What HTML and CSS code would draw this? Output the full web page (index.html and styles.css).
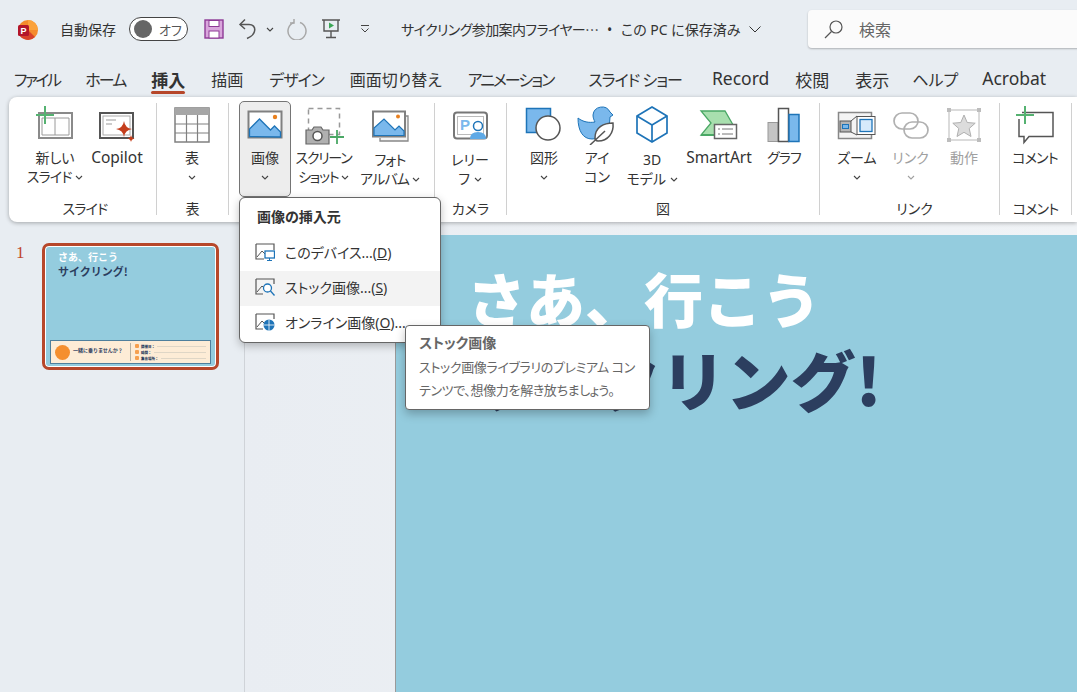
FILE: index.html
```html
<!DOCTYPE html>
<html lang="ja">
<head>
    <meta charset="UTF-8">
    <title>PowerPoint</title>
    <link rel="stylesheet" href="styles.css">
</head>
<body>
<div class="app">
    <!-- title bar -->
    <div class="titlebar">
        <svg class="logo" width="20" height="20" viewBox="0 0 20 20">
            <circle cx="10" cy="10" r="10" fill="#f58a2c"/>
            <path d="M10 0a10 10 0 0 1 10 10H10z" fill="#fba23b"/>
            <path d="M0 10a10 10 0 0 0 17 7l-7-7z" fill="#d8402a"/>
            <rect x="0" y="5" width="11" height="11" rx="1.5" fill="#b3152a"/>
            <text x="5.500" y="13.500" class="logo-p">P</text>
        </svg>
        <span class="autosave">自動保存</span>
        <div class="toggle"><span class="knob"></span><span class="toggle-text">オフ</span></div>
        <svg class="qat-save" width="20" height="20" viewBox="0 0 20 20">
            <rect x="1" y="1" width="18" height="18" fill="#d9a6dc" stroke="#8e3a96" stroke-width="1.4"/>
            <rect x="5" y="1.5" width="10" height="6" fill="#fff" stroke="#8e3a96"/>
            <rect x="5" y="12" width="10" height="7" fill="#fff" stroke="#8e3a96"/>
        </svg>
        <svg class="qat-undo" width="20" height="22" viewBox="0 0 20 22" fill="none" stroke="#555" stroke-width="1.500">
            <path d="M7 1.500 2 6.500l5 4.500"/><path d="M2.500 6.500H11c8 0 8 10-2 14"/>
        </svg>
        <svg class="chev qat-chev" width="8" height="5" viewBox="0 0 8 5"><path d="M1 1l3 3 3-3"/></svg>
        <svg class="qat-redo" width="22" height="22" viewBox="0 0 22 22" fill="none" stroke="#a8a8a8" stroke-width="1.500">
            <path d="M14 4.500a9 9 0 1 1-6 0"/><path d="M8 1v4H4"/>
        </svg>
        <svg class="qat-show" width="20" height="20" viewBox="0 0 20 20" fill="none" stroke="#555" stroke-width="1.400">
            <path d="M1 1h18M3 1v11h14V1M10 12v6M5 18.500h10"/>
            <path d="M8 3.500l5 3-5 3z" fill="#3aa655" stroke="none"/>
        </svg>
        <svg class="qat-more" width="10" height="8" viewBox="0 0 10 8" fill="none" stroke="#444"><path d="M1 .5h8M1.500 3.500 5 7l3.500-3.500"/></svg>
        <span class="docname">サイクリング参加案内フライヤー…</span>
        <span class="dot">•</span>
        <span class="saved">この PC に保存済み</span>
        <svg class="saved-chev" width="12" height="7" viewBox="0 0 12 7" fill="none" stroke="#333"><path d="M.5.5 6 6l5.500-5.500"/></svg>
        <div class="search">
            <svg width="20" height="20" viewBox="0 0 20 20" fill="none" stroke="#555" stroke-width="1.200"><circle cx="12" cy="8" r="6"/><path d="M7.500 12.500 1 19"/></svg>
            <span>検索</span>
        </div>
    </div>

    <!-- tabs -->
    <div class="tabs">
        <div class="tab k2 file">ファイル</div>
        <div class="tab k2">ホーム</div>
        <div class="tab big active">挿入</div>
        <div class="tab">描画</div>
        <div class="tab k1">デザイン</div>
        <div class="tab">画面切り替え</div>
        <div class="tab k2 wide-r">アニメーション</div>
        <div class="tab k1 wide">スライド ショー</div>
        <div class="tab lat wide-l">Record</div>
        <div class="tab big">校閲</div>
        <div class="tab big">表示</div>
        <div class="tab help">ヘルプ</div>
        <div class="tab lat">Acrobat</div>
    </div>

    <!-- ribbon -->
    <div class="ribbon">
        <div class="group g-slide">
            <div class="btns">
                <div class="btn w62">
                    <svg class="ico" viewBox="0 0 40 40" fill="none">
                        <rect x="4" y="8" width="33" height="25" fill="#fff" stroke="#8a8a8a" stroke-width="2"/>
                        <path d="M7 13h27v17H7zM20 13v17" stroke="#9a9a9a"/>
                        <path d="M10 1v18M1 10h18" stroke="#55b271" stroke-width="2"/>
                    </svg>
                    <div class="lbl">新しい<br><span class="tight">スライド</span> <svg class="chev" width="8" height="5" viewBox="0 0 8 5"><path d="M1 1l3 3 3-3"/></svg></div>
                </div>
                <div class="btn w62">
                    <svg class="ico" viewBox="0 0 40 40" fill="none">
                        <rect x="3" y="8" width="33" height="25" fill="#fff" stroke="#555" stroke-width="2"/>
                        <rect x="6" y="11" width="27" height="19" stroke="#aaa"/>
                        <path d="M9 15h10M9 19h6" stroke="#999"/>
                        <path d="M27 16q1 7 8 8-7 1-8 8-1-7-8-8 7-1 8-8z" fill="#c43e1c"/>
                        <path d="M34 30q.5 3 3.500 3.500-3 .5-3.500 3.500-.5-3-3.500-3.500 3-.5 3.500-3.500z" fill="#c43e1c"/>
                    </svg>
                    <div class="lbl lat">Copilot</div>
                </div>
            </div>
            <div class="grp-label tight">スライド</div>
        </div>

        <div class="group g-table">
            <div class="btns">
                <div class="btn w70">
                    <svg class="ico" viewBox="0 0 40 40" fill="none">
                        <rect x="3" y="3" width="34" height="34" fill="#fff" stroke="#808080" stroke-width="1.500"/>
                        <rect x="3" y="3" width="34" height="7" fill="#a6a6a6"/>
                        <path d="M14.500 10v27M25.500 10v27M3 19h34M3 28h34" stroke="#808080" stroke-width="1.200"/>
                    </svg>
                    <div class="lbl">表<br><svg class="chev" width="8" height="5" viewBox="0 0 8 5"><path d="M1 1l3 3 3-3"/></svg></div>
                </div>
            </div>
            <div class="grp-label">表</div>
        </div>

        <div class="group g-image">
            <div class="btns">
                <div class="btn w52 pressed">
                    <svg class="ico" viewBox="0 0 40 40" fill="none">
                        <rect x="3.500" y="6.500" width="33" height="26" fill="#fff" stroke="#808080" stroke-width="2"/>
                        <path d="M4.500 31.500V24l10-10 11 11 4-4 6 6v5z" fill="#7ab8ec" stroke="#1e74b8" stroke-width="1.300"/>
                        <circle cx="30" cy="12" r="2.200" fill="#e8801f"/>
                    </svg>
                    <div class="lbl">画像<br><svg class="chev" width="8" height="5" viewBox="0 0 8 5"><path d="M1 1l3 3 3-3"/></svg></div>
                </div>
                <div class="btn w65">
                    <svg class="ico" viewBox="0 0 40 40" fill="none">
                        <rect x="4.500" y="3.500" width="31" height="26" stroke="#999" stroke-width="1.500" stroke-dasharray="5 4"/>
                        <path d="M2 26h6l2-3h7l2 3h6v14H2z" transform="translate(0 -1)" fill="#b0b0b0" stroke="#666" stroke-width="1.200"/>
                        <circle cx="13.500" cy="31" r="4.500" fill="#fff" stroke="#555" stroke-width="1.500"/>
                        <path d="M33 25v14M26 32h14" stroke="#4aa865" stroke-width="1.800"/>
                    </svg>
                    <div class="lbl tighter">スクリーン<br>ショット <svg class="chev" width="8" height="5" viewBox="0 0 8 5"><path d="M1 1l3 3 3-3"/></svg></div>
                </div>
                <div class="btn w68">
                    <svg class="ico" viewBox="0 0 40 40" fill="none">
                        <path d="M35 11h3v25H10v-3" fill="#f3f3f3" stroke="#888" stroke-width="1.300"/>
                        <rect x="3" y="6.500" width="32" height="25" fill="#fff" stroke="#808080" stroke-width="2"/>
                        <path d="M4 30.500V23l10-9 11 11 4-4 5 5v4.500z" fill="#7ab8ec" stroke="#1e74b8" stroke-width="1.200"/>
                        <circle cx="28" cy="11.500" r="2" fill="#e8801f"/>
                    </svg>
                    <div class="lbl lbl-low tight">フォト<br>アルバム <svg class="chev" width="8" height="5" viewBox="0 0 8 5"><path d="M1 1l3 3 3-3"/></svg></div>
                </div>
            </div>
            <div class="grp-label"></div>
        </div>

        <div class="group g-camera">
            <div class="btns">
                <div class="btn w70">
                    <svg class="ico" viewBox="0 0 40 40" fill="none">
                        <rect x="4" y="7.500" width="33" height="26" rx="3" fill="#fff" stroke="#777" stroke-width="2"/>
                        <rect x="7.500" y="11.500" width="26" height="18" stroke="#bbb"/>
                        <text x="10" y="25" class="p-mark">P</text>
                        <circle cx="28" cy="21" r="4.500" fill="#fff" stroke="#1e74b8" stroke-width="1.500"/>
                        <path d="M20 34q0-7 8-7t8 7z" fill="#5ea9e6"/>
                    </svg>
                    <div class="lbl lbl-low">レリー<br>フ <svg class="chev" width="8" height="5" viewBox="0 0 8 5"><path d="M1 1l3 3 3-3"/></svg></div>
                </div>
            </div>
            <div class="grp-label">カメラ</div>
        </div>

        <div class="group g-draw">
            <div class="btns">
                <div class="btn w50">
                    <svg class="ico" viewBox="0 0 40 40" fill="none">
                        <rect x="2.500" y="3.500" width="24" height="24" fill="#7ab8ec" stroke="#1e74b8" stroke-width="1.500"/>
                        <circle cx="24" cy="23" r="12" fill="#fff" stroke="#555" stroke-width="1.500"/>
                    </svg>
                    <div class="lbl">図形<br><svg class="chev" width="8" height="5" viewBox="0 0 8 5"><path d="M1 1l3 3 3-3"/></svg></div>
                </div>
                <div class="btn w56">
                    <svg class="ico" viewBox="0 0 40 40" fill="none">
                        <path d="M1 13c5 4 11 5 17 4-1-2-2-4-2-7a9 9 0 0 1 17-3l3 3-3 2c0 14-8 22-18 22C6 34 1 26 1 13z" fill="#7ab8ec" stroke="#1e74b8"/>
                        <path d="M36 18c-9 0-18 4-18 15 0 2 1 3 3 3 10 0 16-8 15-18z" fill="#fff" stroke="#555" stroke-width="1.500"/>
                        <path d="M13 40l15-14" stroke="#555" stroke-width="1.500"/>
                    </svg>
                    <div class="lbl">アイ<br>コン</div>
                </div>
                <div class="btn w54">
                    <svg class="ico" viewBox="0 0 40 40" fill="none" stroke="#1e74b8" stroke-width="1.700">
                        <path d="M20 2 35 11v17L20 37 5 28V11z" fill="#fff"/>
                        <path d="M5 11l15 9 15-9M20 20v17"/>
                    </svg>
                    <div class="lbl lbl-low">3D<br>モデル <svg class="chev" width="8" height="5" viewBox="0 0 8 5"><path d="M1 1l3 3 3-3"/></svg></div>
                </div>
                <div class="btn w80">
                    <svg class="ico" viewBox="0 0 40 40" fill="none">
                        <path d="M2 6h24l11 19H26l-5 5H2l10-12z" fill="#a8dfae" stroke="#4aa865" stroke-width="1.300"/>
                        <path d="M2 30h19l3-3" stroke="#4aa865" stroke-width="2"/>
                        <rect x="15.500" y="19.500" width="22" height="14" fill="#fff" stroke="#666" stroke-width="1.500"/>
                        <path d="M19 24h2M23 24h11M19 29h2M23 29h11" stroke="#777"/>
                    </svg>
                    <div class="lbl lat">SmartArt</div>
                </div>
                <div class="btn w50">
                    <svg class="ico" viewBox="0 0 40 40" fill="none">
                        <rect x="4" y="17.500" width="10" height="19" fill="#c4c4c4" stroke="#999"/>
                        <rect x="14.500" y="3.500" width="10" height="33" fill="#fff" stroke="#555" stroke-width="1.500"/>
                        <rect x="25" y="9.500" width="10" height="27" fill="#7ab8ec" stroke="#1e74b8" stroke-width="1.500"/>
                    </svg>
                    <div class="lbl tight">グラフ</div>
                </div>
            </div>
            <div class="grp-label">図</div>
        </div>

        <div class="group g-link">
            <div class="btns">
                <div class="btn w54">
                    <svg class="ico" viewBox="0 0 40 40" fill="none">
                        <rect x="1.500" y="7.500" width="33" height="26" fill="#f4f4f4" stroke="#888" stroke-width="1.500"/>
                        <rect x="3" y="16" width="11" height="11" fill="#b5b5b5" stroke="#555"/>
                        <rect x="5.500" y="19.500" width="6" height="4" fill="#7ab8ec" stroke="#1e74b8"/>
                        <path d="M14 16l6-5M14 27l6 3" stroke="#555"/>
                        <rect x="20" y="11.500" width="18" height="18" fill="#fff" stroke="#555"/>
                        <rect x="23" y="14.500" width="12" height="12" fill="#d6eafb" stroke="#1e74b8" stroke-width="1.300"/>
                    </svg>
                    <div class="lbl">ズーム<br><svg class="chev" width="8" height="5" viewBox="0 0 8 5"><path d="M1 1l3 3 3-3"/></svg></div>
                </div>
                <div class="btn w53 disabled">
                    <svg class="ico" viewBox="0 0 40 40" fill="none" stroke="#b0b0b0" stroke-width="1.700">
                        <rect x="3" y="8" width="24" height="16" rx="8"/>
                        <rect x="13" y="17" width="24" height="16" rx="8"/>
                    </svg>
                    <div class="lbl">リンク<br><svg class="chev" width="8" height="5" viewBox="0 0 8 5"><path d="M1 1l3 3 3-3"/></svg></div>
                </div>
                <div class="btn w54 disabled">
                    <svg class="ico" viewBox="0 0 40 40" fill="none">
                        <rect x="5" y="5" width="30" height="30" stroke="#b8b8b8"/>
                        <path d="M20 10l3.200 7.500 8 .7-6 5.300 1.800 8L20 27.300 13 31.500l1.800-8-6-5.300 8-.7z" fill="#dcdcdc" stroke="#b0b0b0"/>
                        <path d="M3 3h4v4H3zM33 3h4v4h-4zM3 33h4v4H3zM33 33h4v4h-4z" fill="#bdbdbd"/>
                    </svg>
                    <div class="lbl">動作</div>
                </div>
            </div>
            <div class="grp-label">リンク</div>
        </div>

        <div class="group g-comment">
            <div class="btns">
                <div class="btn w70">
                    <svg class="ico" viewBox="0 0 40 40" fill="none">
                        <path d="M7 7.500h31v24H14l-5 6v-6H4V14" fill="#fff" stroke="#555" stroke-width="1.500"/>
                        <path d="M10 1v18M1 10h18" stroke="#55b271" stroke-width="2"/>
                    </svg>
                    <div class="lbl tight">コメント</div>
                </div>
            </div>
            <div class="grp-label tight">コメント</div>
        </div>
    </div>

    <!-- workspace -->
    <div class="work">
        <div class="thumbs">
            <div class="num">1</div>
            <div class="thumb">
                <div class="thumb-t1">さあ、行こう</div>
                <div class="thumb-t2">サイクリング!</div>
                <div class="thumb-foot">
                    <span class="thumb-circle"></span>
                    <span class="thumb-ask">一緒に乗りませんか？</span>
                    <div class="thumb-rows">
                        <div class="thumb-row"><i></i><b>開催日：</b><em></em></div>
                        <div class="thumb-row"><i></i><b>時間：</b><em></em></div>
                        <div class="thumb-row"><i></i><b>集合場所：</b><em></em></div>
                    </div>
                </div>
            </div>
        </div>
        <div class="canvas">
            <div class="slide">
                <div class="slide-t1">さあ、行こう</div>
                <div class="slide-t2">サイクリング!</div>
            </div>
        </div>
    </div>

    <!-- dropdown -->
    <div class="menu">
        <div class="menu-title">画像の挿入元</div>
        <div class="menu-item">
            <svg width="20" height="18" viewBox="0 0 20 18" fill="none">
                <path d="M1 1h18v6M1 1v15h8" stroke="#555" stroke-width="1.200"/><path d="M2 14l5-6 3 3" stroke="#555"/>
                <rect x="10" y="8" width="9.500" height="7" fill="#fff" stroke="#1e74b8" stroke-width="1.300"/><path d="M12 17.500h5M14.500 15v2" stroke="#1e74b8"/>
            </svg>
            <span>このデバイス...(<u>D</u>)</span>
        </div>
        <div class="menu-item hover">
            <svg width="20" height="18" viewBox="0 0 20 18" fill="none">
                <path d="M1 1h18v5M1 1v15h7" stroke="#555" stroke-width="1.200"/><path d="M2 14l5-6 2 2" stroke="#555"/>
                <circle cx="12.500" cy="10" r="4" fill="#fff" stroke="#1e74b8" stroke-width="1.300"/><path d="M15.500 13l4 4.500" stroke="#1e74b8" stroke-width="1.300"/>
            </svg>
            <span>ストック画像...(<u>S</u>)</span>
        </div>
        <div class="menu-item">
            <svg width="20" height="18" viewBox="0 0 20 18" fill="none">
                <path d="M1 1h18v5M1 1v15h7" stroke="#555" stroke-width="1.200"/><path d="M2 14l5-6 2 2" stroke="#555"/>
                <circle cx="14" cy="12" r="5.500" fill="#1e74b8"/><path d="M8.500 12h11M14 6.500v11" stroke="#fff" stroke-width=".8"/>
            </svg>
            <span>オンライン画像(<u>O</u>)...</span>
        </div>
    </div>

    <!-- tooltip -->
    <div class="tip">
        <div class="tip-title">ストック画像</div>
        <div class="tip-text">ストック画像ライブラリのプレミアム コン<br>テンツで、想像力を解き放ちましょう。</div>
    </div>
</div>
</body>
</html>
```

FILE: styles.css
```css
* {
    box-sizing: border-box;
}
html, body {
    margin: 0;
    height: 100%;
}
body {
    font-family: "Noto Sans", "Noto Sans CJK JP", sans-serif;
    font-feature-settings: "palt";
    color: #333;
    background: #e8edf2;
    overflow: hidden;
}
.app {
    position: relative;
    width: 1077px;
    height: 692px;
    overflow: hidden;
    display: flex;
    flex-direction: column;
}

/* title bar */
.titlebar {
    height: 60px;
    flex: none;
    display: flex;
    align-items: center;
    padding: 0 0 2px 18px;
    font-size: 14px;
}
.logo {
    margin-top: 2px;
}
.logo-p {
    font: bold 9px "Liberation Sans", sans-serif;
    fill: #fff;
    text-anchor: middle;
}
.autosave {
    margin-left: 22px;
    width: 58px;
    font-size: 14px;
    white-space: nowrap;
}
.toggle {
    margin-left: 11px;
    width: 59px;
    height: 24px;
    border: 1px solid #444;
    border-radius: 12px;
    background: #fff;
    display: flex;
    align-items: center;
    padding-left: 4px;
    gap: 7px;
    font-size: 13px;
    color: #555;
}
.toggle-text {
    white-space: nowrap;
}
.knob {
    width: 18px;
    height: 18px;
    border-radius: 50%;
    background: #666;
    flex: none;
}
.qat-save {
    margin-left: 16px;
}
.qat-undo {
    margin-left: 14px;
}
.qat-chev {
    margin-left: 8px;
}
.qat-redo {
    margin-left: 12px;
}
.qat-show {
    margin-left: 13px;
}
.qat-more {
    margin-left: 19px;
}
.docname {
    margin-left: 31px;
    width: 196px;
    font-family: "Noto Sans CJK JP", sans-serif;
    font-size: 14px;
    letter-spacing: -0.6px;
    white-space: nowrap;
    color: #333;
}
.dot {
    margin-left: 10px;
    width: 14px;
}
.saved {
    font-size: 14px;
    white-space: nowrap;
    width: 128px;
}
.search {
    position: absolute;
    left: 808px;
    top: 10px;
    width: 320px;
    height: 38px;
    background: #fbfbfb;
    border-radius: 4px;
    box-shadow: 0 1px 2px rgba(0,0,0,0.25);
    display: flex;
    align-items: center;
    padding: 0 0 1px 16px;
    gap: 15px;
    font-size: 16px;
    color: #666;
}

/* tabs */
.tabs {
    height: 37px;
    flex: none;
    display: flex;
    padding-left: 1px;
    font-size: 16px;
    white-space: nowrap;
}
.tab {
    padding: 7px 13px 0;
    height: 34px;
    position: relative;
}
.tab.k1 {
    letter-spacing: -1px;
}
.tab.k2 {
    letter-spacing: -2px;
}
.tab.file {
    letter-spacing: -2.500px;
}
.tab.big {
    font-size: 17px;
}
.tab.lat {
    font-size: 17.500px;
    padding-top: 6px;
}
.tab.wide-r {
    padding-right: 19px;
}
.tab.wide {
    padding: 7px 14px 0 16px;
}
.tab.wide-l {
    padding-left: 16px;
}
.tab.help {
    padding: 7px 11px 0 10px;
}
.tab.active {
    font-weight: bold;
}
.tab.active::after {
    content: "";
    position: absolute;
    left: 13px;
    right: 13px;
    bottom: 0;
    height: 3px;
    border-radius: 2px;
    background: #b7472a;
}

/* ribbon */
.ribbon {
    height: 125px;
    flex: none;
    margin-left: 9px;
    padding-top: 6px;
    background: #fff;
    border-radius: 8px 0 0 8px;
    box-shadow: 0 1px 4px rgba(0,0,0,0.3);
    display: flex;
    align-items: flex-start;
    font-size: 14px;
    position: relative;
    z-index: 1;
}
.group {
    height: 112px;
    flex: none;
    display: flex;
    flex-direction: column;
    border-right: 1px solid #d0d0d0;
}
.g-slide { width: 148px; padding-left: 15px; }
.g-table { width: 72px; }
.g-image { width: 206px; padding-left: 10px; }
.g-camera { width: 72px; }
.g-draw { width: 313px; padding-left: 12px; }
.g-link { width: 180px; padding-left: 10px; }
.g-comment { width: 72px; }
.btns {
    display: flex;
    margin-top: -2px;
    height: 96px;
}
.btn {
    height: 96px;
    flex: none;
    border: 1px solid transparent;
    border-radius: 5px;
    padding-top: 3px;
    text-align: center;
    white-space: nowrap;
}
.w50 { width: 50px; }
.w52 { width: 52px; }
.w53 { width: 53px; }
.w54 { width: 54px; }
.w56 { width: 56px; }
.w62 { width: 62px; }
.w65 { width: 65px; }
.w68 { width: 68px; }
.w70 { width: 70px; }
.w80 { width: 80px; }
.btn.pressed {
    background: #ededed;
    border-color: #757575;
}
.btn.disabled .lbl {
    color: #a0a0a0;
}
.btn.disabled .chev path {
    stroke: #a0a0a0;
}
.ico {
    display: block;
    width: 40px;
    height: 40px;
    margin: 0 auto 3px;
}
.lbl {
    line-height: 19px;
}
.lbl.lat {
    font-size: 15.500px;
}
.lbl-low {
    padding-top: 2px;
}
.tight {
    letter-spacing: -0.8px;
}
.tighter {
    letter-spacing: -1.200px;
}
.chev {
    vertical-align: 2px;
}
.chev path {
    fill: none;
    stroke: #444;
    stroke-width: 1.100;
}
.p-mark {
    font: bold 15px "Liberation Sans", sans-serif;
    fill: #7ab8ec;
}
.grp-label {
    margin: auto 0 -1px;
    height: 15px;
    line-height: 15px;
    text-align: center;
    white-space: nowrap;
}
.g-slide .grp-label {
    margin-right: 10px;
}
.g-draw .grp-label {
    margin-right: 12px;
}

/* workspace */
.work {
    flex: 1;
    display: flex;
    margin-top: 13px;
    min-height: 0;
}
.thumbs {
    width: 245px;
    flex: none;
    margin-top: -13px;
    padding: 21px 0 0 15px;
    border-right: 1px solid #cfd3d8;
    display: flex;
    align-items: flex-start;
}
.num {
    width: 27px;
    color: #c0462a;
    font: 17px/20px "Liberation Serif", serif;
    padding-left: 1px;
}
.thumb {
    width: 177px;
    height: 127px;
    border: 3px solid #b7472a;
    border-radius: 7px;
    background: #94ccde;
    box-shadow: inset 0 0 0 1px #fff;
    padding: 4px 0 0 13px;
    position: relative;
    font-weight: bold;
    font-family: "Noto Sans CJK JP", sans-serif;
    font-feature-settings: normal;
}
.thumb-t1 {
    font-size: 10px;
    line-height: 14px;
    color: #fff;
}
.thumb-t2 {
    font-size: 11px;
    line-height: 15px;
    color: #2c3e5f;
}
.thumb-foot {
    position: absolute;
    left: 5px;
    right: 5px;
    bottom: 3px;
    height: 24px;
    background: #fdecd6;
    border: 1px solid #4f7f9c;
    display: flex;
    align-items: center;
    padding-left: 4px;
    color: #2c3e5f;
}
.thumb-circle {
    width: 15px;
    height: 15px;
    border-radius: 50%;
    background: #f58f2e;
    flex: none;
}
.thumb-ask {
    font-size: 5px;
    margin: -6px 0 0 3px;
    width: 57px;
    white-space: nowrap;
}
.thumb-rows {
    flex: 1;
    height: 18px;
    border-left: 1px solid #b9b2a2;
    padding: 0 4px 0 4px;
    font-size: 3.500px;
    display: flex;
    flex-direction: column;
    justify-content: space-between;
}
.thumb-row {
    display: flex;
    align-items: center;
    gap: 2px;
    height: 6px;
}
.thumb-row i {
    width: 4px;
    height: 4px;
    background: #f6a04f;
    border-radius: 1px;
    flex: none;
}
.thumb-row b {
    white-space: nowrap;
}
.thumb-row em {
    flex: 1;
    border-bottom: 1px solid #dfd6c6;
}
.canvas {
    flex: 1;
    min-width: 0;
    padding-left: 150px;
    background: linear-gradient(90deg, #e9edf2, #f0f3f6);
    margin-top: -13px;
    padding-top: 13px;
}
.slide {
    height: 100%;
    background: #94ccde;
    border-left: 1px solid #9a9a9a;
    padding: 24px 0 0 71px;
    font-family: "Noto Sans CJK JP", sans-serif;
    font-feature-settings: normal;
    font-weight: 900;
    white-space: nowrap;
}
.slide-t1 {
    font-size: 59px;
    line-height: 78px;
    color: #fff;
}
.slide-t2 {
    font-size: 65px;
    line-height: 82px;
    color: #2c3e5f;
}

/* dropdown */
.menu {
    position: absolute;
    left: 239px;
    top: 197px;
    width: 202px;
    height: 146px;
    background: #fff;
    border: 1px solid #666;
    border-radius: 6px;
    box-shadow: 0 3px 8px rgba(0,0,0,0.25);
    padding-top: 1px;
    z-index: 2;
    font-size: 14px;
    overflow: hidden;
}
.menu-title {
    font-weight: bold;
    height: 37px;
    line-height: 36px;
    padding-left: 17px;
}
.menu-item {
    height: 35px;
    display: flex;
    align-items: center;
    gap: 10px;
    padding: 0 0 3px 15px;
    white-space: nowrap;
}
.menu-item.hover {
    background: #f3f3f3;
}

/* tooltip */
.tip {
    position: absolute;
    left: 405px;
    top: 325px;
    width: 245px;
    height: 85px;
    background: #fff;
    border: 1px solid #666;
    border-radius: 4px;
    box-shadow: 0 4px 10px rgba(0,0,0,0.25);
    padding: 6px 13px;
    z-index: 3;
    color: #666;
}
.tip-title {
    font-size: 14px;
    font-weight: bold;
    line-height: 22px;
    margin-bottom: 2px;
}
.tip-text {
    font-size: 13px;
    line-height: 23px;
    letter-spacing: -0.35px;
    white-space: nowrap;
}
```
